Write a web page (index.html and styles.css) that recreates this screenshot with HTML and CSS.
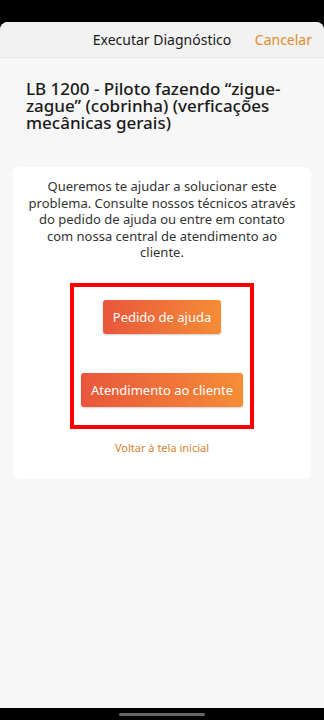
FILE: index.html
```html
<!DOCTYPE html>
<html lang="pt">

<head>
  <meta charset="UTF-8">
  <meta name="viewport" content="width=device-width, initial-scale=1.0">
  <title>Executar Diagnóstico</title>
  <link rel="stylesheet" href="styles.css">
</head>

<body>
  <div class="phone">
    <div class="status-bar"></div>

    <div class="sheet">
      <div class="sheet-header">
        <div></div>
        <div class="sheet-title">Executar Diagnóstico</div>
        <div class="cancel">Cancelar</div>
      </div>

      <div class="content">
        <h1 class="problem-title">LB 1200 - Piloto fazendo “zigue-zague” (cobrinha) (verficações mecânicas gerais)</h1>

        <div class="help-card">
          <p class="help-text">Queremos te ajudar a solucionar este problema. Consulte nossos técnicos através do pedido de ajuda ou entre em contato com nossa central de atendimento ao cliente.</p>

          <div class="highlight">
            <button class="action-button">Pedido de ajuda</button>
            <button class="action-button">Atendimento ao cliente</button>
          </div>

          <a class="back-link" href="#">Voltar à tela inicial</a>
        </div>
      </div>
    </div>

    <div class="nav-bar">
      <div class="home-indicator"></div>
    </div>
  </div>
</body>

</html>
```

FILE: styles.css
```css
body {
  margin: 0;
  padding: 0;
  background-color: #000;
  font-family: "Noto Sans", "Open Sans", Arial, sans-serif;
}

.phone {
  display: flex;
  flex-direction: column;
  width: 324px;
  height: 720px;
  overflow: hidden;
}

.status-bar {
  height: 22px;
  background-color: #000;
}

.sheet {
  flex: 1;
  display: flex;
  flex-direction: column;
  background-color: #f7f7f7;
  border-radius: 8px 8px 0 0;
  overflow: hidden;
}

.sheet-header {
  display: grid;
  grid-template-columns: 1fr auto 1fr;
  align-items: center;
  height: 35px;
  background-color: #f2f2f2;
  border-bottom: 1px solid #e6e6e6;
}

.sheet-title {
  font-size: 14px;
  color: #1a1a1a;
}

.cancel {
  justify-self: end;
  padding-right: 12px;
  font-size: 14px;
  color: #e08a2c;
}

.content {
  padding: 0 13px;
}

.problem-title {
  margin: 22px 0 0 13px;
  font-size: 17px;
  font-weight: 500;
  line-height: 17px;
  color: #1a1a1a;
}

.help-card {
  margin-top: 36px;
  padding: 11px 12px 24px;
  background-color: #fff;
  border-radius: 6px;
  display: flex;
  flex-direction: column;
  align-items: center;
}

.help-text {
  margin: 0;
  font-size: 13px;
  line-height: 16.5px;
  color: #333;
  text-align: center;
}

.highlight {
  margin-top: 22px;
  width: 176px;
  padding: 13px 0 18px;
  border: 4px solid #f00;
  display: flex;
  flex-direction: column;
  align-items: center;
  gap: 39px;
}

.action-button {
  height: 34px;
  padding: 0 10px;
  border: none;
  border-radius: 3px;
  background: linear-gradient(90deg, #e9563b, #f58d36);
  box-shadow: 0 1px 2px rgba(0, 0, 0, 0.2);
  color: #fff;
  font-family: inherit;
  font-size: 13px;
}

.back-link {
  margin-top: 11px;
  font-size: 11px;
  color: #d8822d;
  text-decoration: none;
}

.nav-bar {
  height: 12px;
  display: flex;
  justify-content: center;
  align-items: center;
  background-color: #000;
}

.home-indicator {
  width: 86px;
  height: 3px;
  border-radius: 2px;
  background-color: #666;
}
```
